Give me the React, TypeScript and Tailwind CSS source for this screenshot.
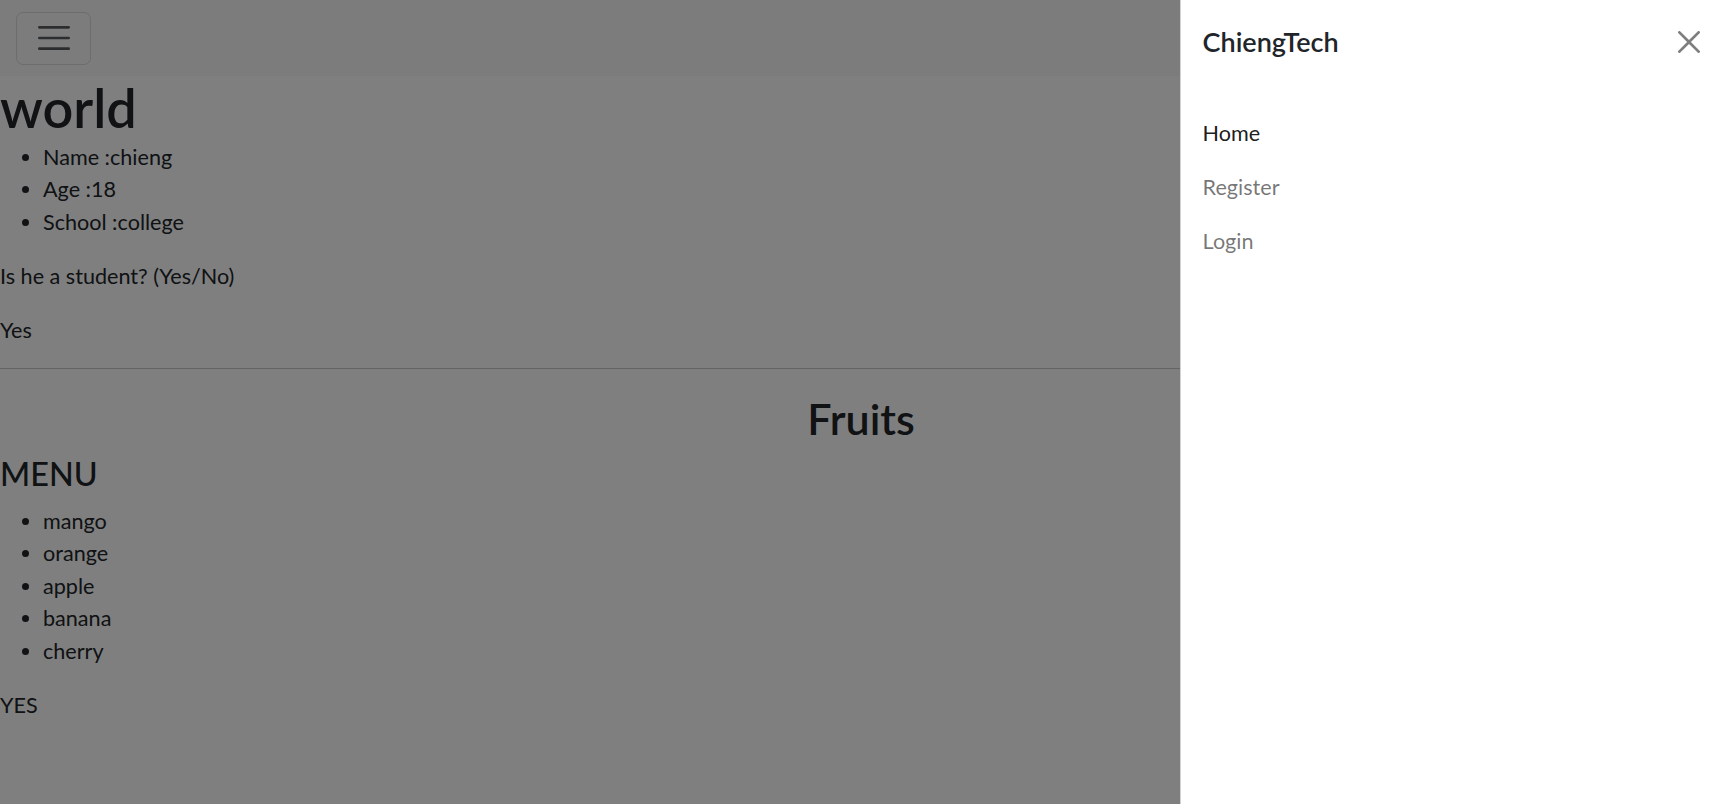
import React from 'react';

// Page behind the open offcanvas menu
const font = "font-['Lato','Noto_Sans',sans-serif]";

const HamburgerIcon: React.FC = () => (
  <svg viewBox="0 0 30 30" className="w-[40px] h-[40px]">
    <path
      d="M4 7h22M4 15h22M4 23h22"
      stroke="rgba(33,37,41,0.75)"
      strokeLinecap="round"
      strokeMiterlimit={10}
      strokeWidth={2}
    />
  </svg>
);

const CloseIcon: React.FC = () => (
  <svg viewBox="0 0 16 16" className="w-[22px] h-[22px] opacity-50">
    <path
      fill="#000"
      d="M.293.293a1 1 0 0 1 1.414 0L8 6.586 14.293.293a1 1 0 1 1 1.414 1.414L9.414 8l6.293 6.293a1 1 0 0 1-1.414 1.414L8 9.414l-6.293 6.293a1 1 0 0 1-1.414-1.414L6.586 8 .293 1.707a1 1 0 0 1 0-1.414"
    />
  </svg>
);

const profile = ['Name :chieng', 'Age :18', 'School :college'];
const fruits = ['mango', 'orange', 'apple', 'banana', 'cherry'];

export default function App() {
  return (
    <div className={`${font} relative min-h-[804px] bg-white text-[#212529] text-[21.6px] leading-[1.5]`}>
      {/* Navbar */}
      <nav className="h-[76px] bg-[#f8f9fa] px-[16px] flex items-center">
        <button className="w-[75px] h-[53px] border border-[rgba(33,37,41,0.15)] rounded-[7px] flex items-center justify-center">
          <HamburgerIcon />
        </button>
      </nav>

      <h1 className="text-[54px] font-semibold leading-[1.2]">world</h1>
      <ul className="list-disc pl-[43px] mb-[21.6px]">
        {profile.map((p) => (
          <li key={p}>{p}</li>
        ))}
      </ul>
      <p className="mb-[21.6px]">Is he a student? (Yes/No)</p>
      <p className="mb-[21.6px]">Yes</p>
      <hr className="border-t border-[#212529] opacity-25 mt-[21.6px] mb-[24px]" />

      <h2 className="text-[43px] font-semibold leading-[1.2] text-center mb-[11px]">Fruits</h2>
      <h4 className="text-[32.4px] font-medium leading-[1.2] mb-[11px]">MENU</h4>
      <ul className="list-disc pl-[43px] mb-[21.6px]">
        {fruits.map((f) => (
          <li key={f}>{f}</li>
        ))}
      </ul>
      <p>YES</p>

      {/* Backdrop */}
      <div className="fixed inset-0 bg-black/50" />

      {/* Offcanvas */}
      <aside className="fixed top-0 right-0 h-full w-[542px] bg-white border-l border-black/[.175] flex flex-col">
        <div className="flex items-center justify-between p-[21.6px]">
          <h5 className="text-[27px] font-semibold leading-[1.5]">ChiengTech</h5>
          <button className="p-[5px] -mr-[5px] flex items-center justify-center">
            <CloseIcon />
          </button>
        </div>
        <div className="p-[21.6px] pt-[23px]">
          <ul className="flex flex-col">
            <li className="py-[10.8px] text-black/90">Home</li>
            <li className="py-[10.8px] text-black/55">Register</li>
            <li className="py-[10.8px] text-black/55">Login</li>
          </ul>
        </div>
      </aside>
    </div>
  );
}
